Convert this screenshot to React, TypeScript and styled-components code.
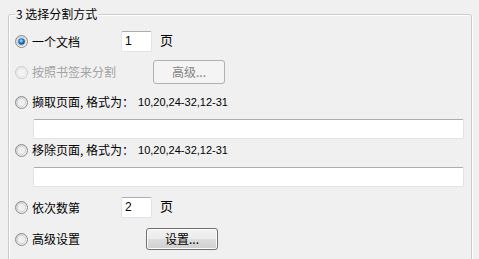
import React, { useId } from "react";
import styled, { createGlobalStyle } from "styled-components";

const Global = createGlobalStyle`
  html, body { margin: 0; padding: 0; background: #f0f0f0; }
  body {
    font-family: "Noto Sans CJK SC", "Liberation Sans", sans-serif;
    font-size: 12px;
    color: #000;
    overflow: hidden;
  }
`;

const Page = styled.div`
  width: 479px;
  height: 259px;
  padding: 14px 0 0 8px;
  box-sizing: border-box;
  overflow: hidden;
`;

const GroupBox = styled.div`
  position: relative;
  width: 464px;
  height: 270px;
  box-sizing: border-box;
  border: 1px solid #c9ccce;
  border-radius: 3px;
  box-shadow: inset 1px 1px 0 #ffffff, 1px 1px 0 #ffffff;
`;

const Legend = styled.div`
  position: absolute;
  top: -9px;
  left: 6px;
  padding: 0 1px;
  background: #f0f0f0;
  line-height: 16px;
  font-size: 12px;
  white-space: nowrap;
`;

const Content = styled.div`
  display: flex;
  flex-direction: column;
  padding: 16px 0 0 6px;
`;

const Row = styled.div<{ $h: number; $mt: number }>`
  display: flex;
  align-items: center;
  height: ${(p) => p.$h}px;
  margin-top: ${(p) => p.$mt}px;
`;

const Label = styled.span<{ $w?: number; $disabled?: boolean }>`
  display: inline-flex;
  align-items: center;
  margin-left: 4px;
  ${(p) => (p.$w ? `width: ${p.$w}px;` : "")}
  flex: none;
  white-space: nowrap;
  line-height: 16px;
  color: ${(p) => (p.$disabled ? "#a3a3a3" : "#000")};
`;

const Format = styled.span`
  font-family: "Liberation Sans", sans-serif;
  font-size: 11px;
  margin-left: 4px;
`;

const SmallInput = styled.div`
  width: 31px;
  height: 21px;
  box-sizing: border-box;
  background: #fff;
  border: 1px solid #e2e3ea;
  border-top-color: #abadb3;
  border-radius: 2px;
  font-family: "Liberation Sans", sans-serif;
  font-size: 12px;
  line-height: 19px;
  padding-left: 3px;
`;

const Unit = styled.span`
  margin-left: 8px;
  margin-top: -3px;
  font-size: 13px;
  line-height: 16px;
`;

const WideInput = styled.div<{ $mt: number }>`
  margin-top: ${(p) => p.$mt}px;
  margin-left: 18px;
  width: 431px;
  height: 20px;
  box-sizing: border-box;
  background: #fff;
  border: 1px solid #e2e3ea;
  border-top-color: #abadb3;
  border-radius: 2px;
`;

const Button = styled.div<{ $disabled?: boolean; $w: number; $h: number }>`
  width: ${(p) => p.$w}px;
  height: ${(p) => p.$h}px;
  box-sizing: border-box;
  display: flex;
  align-items: center;
  justify-content: center;
  border-radius: 3px;
  line-height: 16px;
  border: 1px solid ${(p) => (p.$disabled ? "#adb2b5" : "#707070")};
  color: ${(p) => (p.$disabled ? "#838383" : "#000")};
  background: ${(p) =>
    p.$disabled
      ? "#f4f4f4"
      : "linear-gradient(to bottom, #f2f2f2 0%, #ebebeb 50%, #dddddd 51%, #cfcfcf 100%)"};
  box-shadow: ${(p) => (p.$disabled ? "none" : "inset 0 0 0 1px #fcfcfc")};
`;

type RadioProps = { checked?: boolean; disabled?: boolean };

function Radio({ checked, disabled }: RadioProps) {
  const id = useId().replace(/:/g, "");
  return (
    <svg width="13" height="13" viewBox="0 0 13 13" style={{ flex: "none" }}>
      <defs>
        <linearGradient id={`f${id}`} x1="0" y1="0" x2="1" y2="1">
          <stop offset="0" stopColor={disabled ? "#e6e6e6" : "#cfcfcf"} />
          <stop offset="1" stopColor="#ffffff" />
        </linearGradient>
        <radialGradient id={`d${id}`} cx="0.45" cy="0.4" r="0.6">
          <stop offset="0" stopColor="#bfe8ff" />
          <stop offset="0.45" stopColor="#2d8ee0" />
          <stop offset="1" stopColor="#0b3f78" />
        </radialGradient>
      </defs>
      <circle
        cx="6.5"
        cy="6.5"
        r="6"
        fill={`url(#f${id})`}
        stroke={disabled ? "#c9c9c9" : "#8a8a8a"}
        strokeWidth="1"
      />
      <circle cx="6.5" cy="6.5" r="4.2" fill={disabled ? "#f3f3f3" : "#f0f0f0"} stroke={disabled ? "#e2e2e2" : "#c8c8c8"} strokeWidth="0.8" />
      {checked && <circle cx="6.5" cy="6.5" r="3.3" fill={`url(#d${id})`} />}
    </svg>
  );
}

export default function App() {
  return (
    <>
      <Global />
      <Page>
        <GroupBox>
          <Legend>3 选择分割方式</Legend>
          <Content>
            <Row $h={21} $mt={0}>
              <Radio checked />
              <Label $w={89}>一个文档</Label>
              <SmallInput>1</SmallInput>
              <Unit>页</Unit>
            </Row>
            <Row $h={24} $mt={8}>
              <Radio disabled />
              <Label $w={121} $disabled>按照书签来分割</Label>
              <Button $disabled $w={72} $h={24}>高级...</Button>
            </Row>
            <Row $h={16} $mt={10}>
              <Radio />
              <Label>
                撷取页面, 格式为：<Format>10,20,24-32,12-31</Format>
              </Label>
            </Row>
            <WideInput $mt={9} />
            <Row $h={16} $mt={3}>
              <Radio />
              <Label>
                移除页面, 格式为：<Format>10,20,24-32,12-31</Format>
              </Label>
            </Row>
            <WideInput $mt={9} />
            <Row $h={21} $mt={10}>
              <Radio />
              <Label $w={89}>依次数第</Label>
              <SmallInput>2</SmallInput>
              <Unit>页</Unit>
            </Row>
            <Row $h={22} $mt={10}>
              <Radio />
              <Label $w={114}>高级设置</Label>
              <Button $w={72} $h={22}>设置...</Button>
            </Row>
          </Content>
        </GroupBox>
      </Page>
    </>
  );
}
